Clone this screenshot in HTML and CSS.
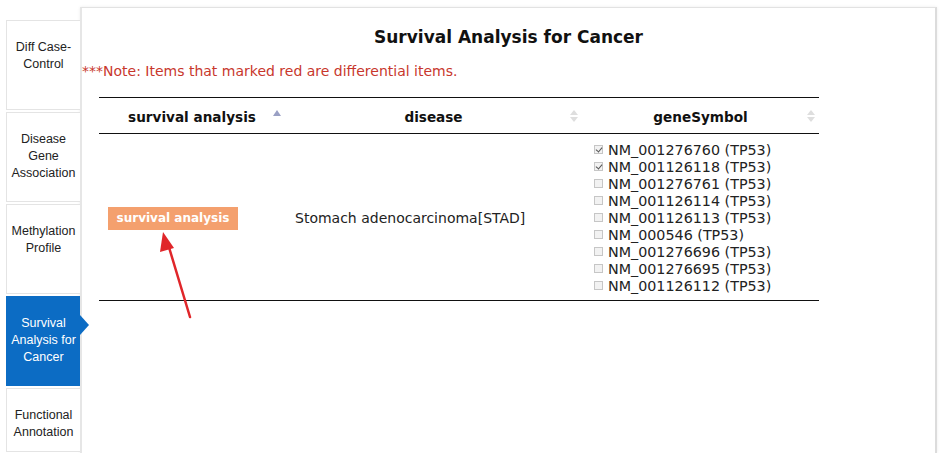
FILE: index.html
```html
<!DOCTYPE html>
<html lang="en">
<head>
    <meta charset="UTF-8">
    <title>Survival Analysis for Cancer</title>
    <link rel="stylesheet" href="styles.css">
</head>
<body>

<div class="page">
    <!-- Zakladki boczne -->
    <ul class="tabs">
        <li>Diff Case-Control</li>
        <li>Disease Gene Association</li>
        <li>Methylation Profile</li>
        <li class="active">Survival Analysis for Cancer</li>
        <li>Functional Annotation</li>
    </ul>

    <div class="panel">
        <h2>Survival Analysis for Cancer</h2>
        <p class="note">***Note: Items that marked red are differential items.</p>

        <table class="results">
            <thead>
                <tr>
                    <th class="col-analysis">survival analysis <span class="sort asc"></span></th>
                    <th class="col-disease">disease <span class="sort both"></span></th>
                    <th class="col-gene">geneSymbol <span class="sort both"></span></th>
                </tr>
            </thead>
            <tbody>
                <tr>
                    <td class="col-analysis"><span class="btn">survival analysis</span></td>
                    <td class="col-disease">Stomach adenocarcinoma[STAD]</td>
                    <td class="col-gene">
                        <ul class="genes">
                            <li><span class="box checked"></span>NM_001276760 (TP53)</li>
                            <li><span class="box checked"></span>NM_001126118 (TP53)</li>
                            <li><span class="box"></span>NM_001276761 (TP53)</li>
                            <li><span class="box"></span>NM_001126114 (TP53)</li>
                            <li><span class="box"></span>NM_001126113 (TP53)</li>
                            <li><span class="box"></span>NM_000546 (TP53)</li>
                            <li><span class="box"></span>NM_001276696 (TP53)</li>
                            <li><span class="box"></span>NM_001276695 (TP53)</li>
                            <li><span class="box"></span>NM_001126112 (TP53)</li>
                        </ul>
                    </td>
                </tr>
            </tbody>
        </table>
    </div>
</div>

<!-- Strzalka -->
<svg class="pointer" width="60" height="100" viewBox="0 0 60 100">
    <line x1="40" y1="95" x2="18" y2="22" stroke="#e0262a" stroke-width="2.5" stroke-linecap="round"/>
    <polygon points="13,10 10,30 24,26" fill="#e0262a"/>
</svg>

</body>
</html>
```

FILE: styles.css
```css
* {
    margin: 0;
    padding: 0;
    box-sizing: border-box;
}

body {
    font-family: 'DejaVu Sans', Verdana, sans-serif;
    background: #fff;
    color: #222;
    width: 941px;
    height: 453px;
    overflow: hidden;
    position: relative;
}

.page {
    display: flex;
    align-items: flex-start;
    padding: 7px 4px 0 6px;
}

/* Zakladki */
.tabs {
    list-style: none;
    width: 74px;
    margin-top: 13px;
    display: flex;
    flex-direction: column;
    gap: 2px;
}

.tabs li {
    position: relative;
    height: 90px;
    padding: 18px 1px 0;
    border: 1px solid #e4e4e4;
    border-right: 0;
    font-family: 'Liberation Sans', Arial, sans-serif;
    font-size: 12.5px;
    line-height: 17px;
    text-align: center;
    color: #222;
    background: #fff;
}

.tabs li:last-child {
    height: 64px;
}

.tabs li.active {
    background: #0c6cc4;
    border-color: #0c6cc4;
    color: #fff;
}

.tabs li.active::after {
    content: "";
    position: absolute;
    top: 18px;
    right: -9px;
    border-top: 10px solid transparent;
    border-bottom: 10px solid transparent;
    border-left: 9px solid #0c6cc4;
}

/* Panel */
.panel {
    flex: 1;
    height: 446px;
    border: 1px solid #e2e2e2;
    border-bottom: 0;
    border-left: 2px solid #e6e6e6;
    border-right: 2px solid #dcdcdc;
    box-shadow: 0 0 3px rgba(0, 0, 0, 0.08);
    padding-top: 18px;
}

.panel h2 {
    text-align: center;
    font-size: 17px;
    line-height: 22px;
    font-weight: bold;
    color: #111;
}

.note {
    margin-top: 14px;
    font-size: 14px;
    line-height: 18px;
    color: #c8372d;
}

/* Tabela */
.results {
    margin: 17px 0 0 17px;
    width: 720px;
    border-collapse: collapse;
    border-top: 1px solid #111;
    border-bottom: 1px solid #111;
}

.results th {
    position: relative;
    height: 36px;
    font-size: 13.6px;
    font-weight: bold;
    color: #111;
    border-bottom: 1px solid #111;
    text-align: center;
    padding-top: 2px;
}

.col-analysis { width: 186px; }
.col-disease { width: 297px; }

.results td {
    height: 167px;
    font-size: 14px;
    vertical-align: middle;
}

.results td.col-disease {
    padding-left: 10px;
    padding-top: 2px;
}

.sort {
    position: absolute;
    right: 4px;
    top: 12px;
    width: 8px;
    height: 12px;
}

.sort.asc::before {
    content: "";
    position: absolute;
    top: 0;
    left: 0;
    border-left: 4px solid transparent;
    border-right: 4px solid transparent;
    border-bottom: 6px solid #9aa0c4;
}

.sort.both::before,
.sort.both::after {
    content: "";
    position: absolute;
    left: 0;
    border-left: 4px solid transparent;
    border-right: 4px solid transparent;
}

.sort.both::before {
    top: 0;
    border-bottom: 5px solid #dedede;
}

.sort.both::after {
    top: 7px;
    border-top: 5px solid #dedede;
}

.btn {
    display: inline-block;
    margin: 3px 0 0 9px;
    width: 130px;
    height: 23px;
    line-height: 23px;
    text-align: center;
    background: #f4a06e;
    color: #fff;
    font-family: 'DejaVu Sans', Verdana, sans-serif;
    font-size: 12px;
    font-weight: bold;
}

.genes {
    list-style: none;
    padding-left: 12px;
    padding-top: 1px;
}

.genes li {
    display: flex;
    align-items: center;
    height: 17px;
    font-size: 14.3px;
    color: #222;
}

.box {
    width: 9px;
    height: 9px;
    margin-right: 5px;
    border: 1px solid #c6c6c6;
    background: #f2f2f2;
    position: relative;
}

.box.checked::after {
    content: "";
    position: absolute;
    left: 2px;
    top: 0;
    width: 3px;
    height: 5px;
    border-right: 1.5px solid #555;
    border-bottom: 1.5px solid #555;
    transform: rotate(40deg);
}

/* Adnotacja */
.pointer {
    position: absolute;
    left: 150px;
    top: 222px;
}
```
